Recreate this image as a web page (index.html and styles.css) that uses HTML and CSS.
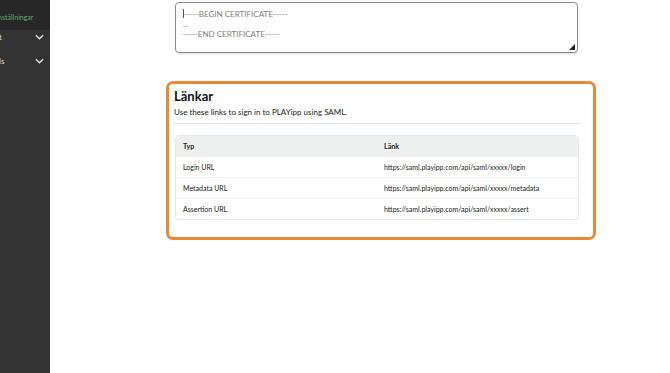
FILE: index.html
```html
<!DOCTYPE html>
<html lang="sv">

<head>
    <meta charset="utf-8">
    <title>SAML</title>
    <link rel="stylesheet" href="styles.css">
</head>

<body>
    <nav class="sidebar">
        <div class="side-active">nställningar</div>
        <div class="side-item"><span>t</span>
            <svg class="chev" viewBox="0 0 10 6" width="9" height="6"><path d="M1 1l4 4 4-4" fill="none" stroke="#ddd" stroke-width="1.6"/></svg>
        </div>
        <div class="side-item"><span>ls</span>
            <svg class="chev" viewBox="0 0 10 6" width="9" height="6"><path d="M1 1l4 4 4-4" fill="none" stroke="#ddd" stroke-width="1.6"/></svg>
        </div>
    </nav>

    <main class="content">
        <div class="cert">
            <div class="cert-line"><span class="caret"></span>-----BEGIN CERTIFICATE-----</div>
            <div class="cert-line">...</div>
            <div class="cert-line">-----END CERTIFICATE-----</div>
            <span class="grip"></span>
        </div>

        <section class="links-card">
            <h2 class="links-title">Länkar</h2>
            <p class="links-sub">Use these links to sign in to PLAYipp using SAML.</p>
            <hr class="divider">
            <table class="links-table">
                <thead>
                    <tr>
                        <th>Typ</th>
                        <th>Länk</th>
                    </tr>
                </thead>
                <tbody>
                    <tr>
                        <td>Login URL</td>
                        <td>https://saml.playipp.com/api/saml/xxxxx/login</td>
                    </tr>
                    <tr>
                        <td>Metadata URL</td>
                        <td>https://saml.playipp.com/api/saml/xxxxx/metadata</td>
                    </tr>
                    <tr>
                        <td>Assertion URL</td>
                        <td>https://saml.playipp.com/api/saml/xxxxx/assert</td>
                    </tr>
                </tbody>
            </table>
        </section>
    </main>
</body>

</html>
```

FILE: styles.css
```css
html, body {
    margin: 0;
    height: 100%;
}

body {
    display: flex;
    font-family: Lato, "Open Sans", sans-serif;
    background: #fff;
    color: #222;
}

.sidebar {
    width: 50px;
    flex-shrink: 0;
    background: #333333;
    color: #ddd;
    font-size: 8px;
    overflow: hidden;
}

.side-active {
    height: 30px;
    background: #272727;
    color: #5fa86a;
    font-size: 7px;
    line-height: 34px;
    white-space: nowrap;
    margin-left: -2px;
}

.side-item {
    display: flex;
    align-items: center;
    justify-content: space-between;
    height: 24px;
    padding-right: 6px;
    margin-left: -1px;
}

.side-item:nth-child(2) {
    margin-top: -5px;
}

.content {
    flex: 1;
    padding-left: 116px;
}

/* looks like a textarea */
.cert {
    position: relative;
    box-sizing: border-box;
    width: 403px;
    height: 51px;
    margin: 2px 0 0 9px;
    border: 1px solid #8c8c8c;
    border-radius: 4px;
    padding: 6px 7px;
    font-size: 8px;
    line-height: 10px;
    color: #808080;
    box-shadow: 0 1px 2px rgba(0, 0, 0, 0.15);
}

.caret {
    display: inline-block;
    width: 1px;
    height: 9px;
    background: #555;
    vertical-align: -1px;
    margin-right: 0;
}

.grip {
    position: absolute;
    right: 2px;
    bottom: 2px;
    width: 0;
    height: 0;
    border-left: 6px solid transparent;
    border-bottom: 6px solid #222;
}

.links-card {
    box-sizing: border-box;
    width: 430px;
    margin-top: 28px;
    border: 3px solid #e8893a;
    border-radius: 7px;
    padding: 4px 14px 17px 5px;
}

.links-title {
    margin: 0;
    font-size: 13px;
    font-weight: 700;
    color: #111;
    line-height: 16px;
}

.links-sub {
    margin: 3px 0 0;
    font-size: 8px;
    line-height: 11px;
    color: #222;
}

.divider {
    border: 0;
    border-top: 1px solid #e6e6e6;
    margin: 5px -2px 0 0;
}

.links-table {
    width: 404px;
    margin: 11px 0 0 1px;
    border-collapse: separate;
    border-spacing: 0;
    border: 1px solid #e6e8e8;
    border-radius: 4px;
    font-size: 7px;
    color: #222;
}

.links-table th {
    background: #eef0f0;
    text-align: left;
    font-weight: 700;
    height: 20px;
    padding: 0 7px;
}

.links-table th:first-child {
    border-top-left-radius: 4px;
}

.links-table th:last-child {
    border-top-right-radius: 4px;
}

.links-table td {
    height: 20px;
    padding: 0 7px;
    border-top: 1px solid #eeeeee;
}

.links-table th:first-child,
.links-table td:first-child {
    width: 187px;
}
```
